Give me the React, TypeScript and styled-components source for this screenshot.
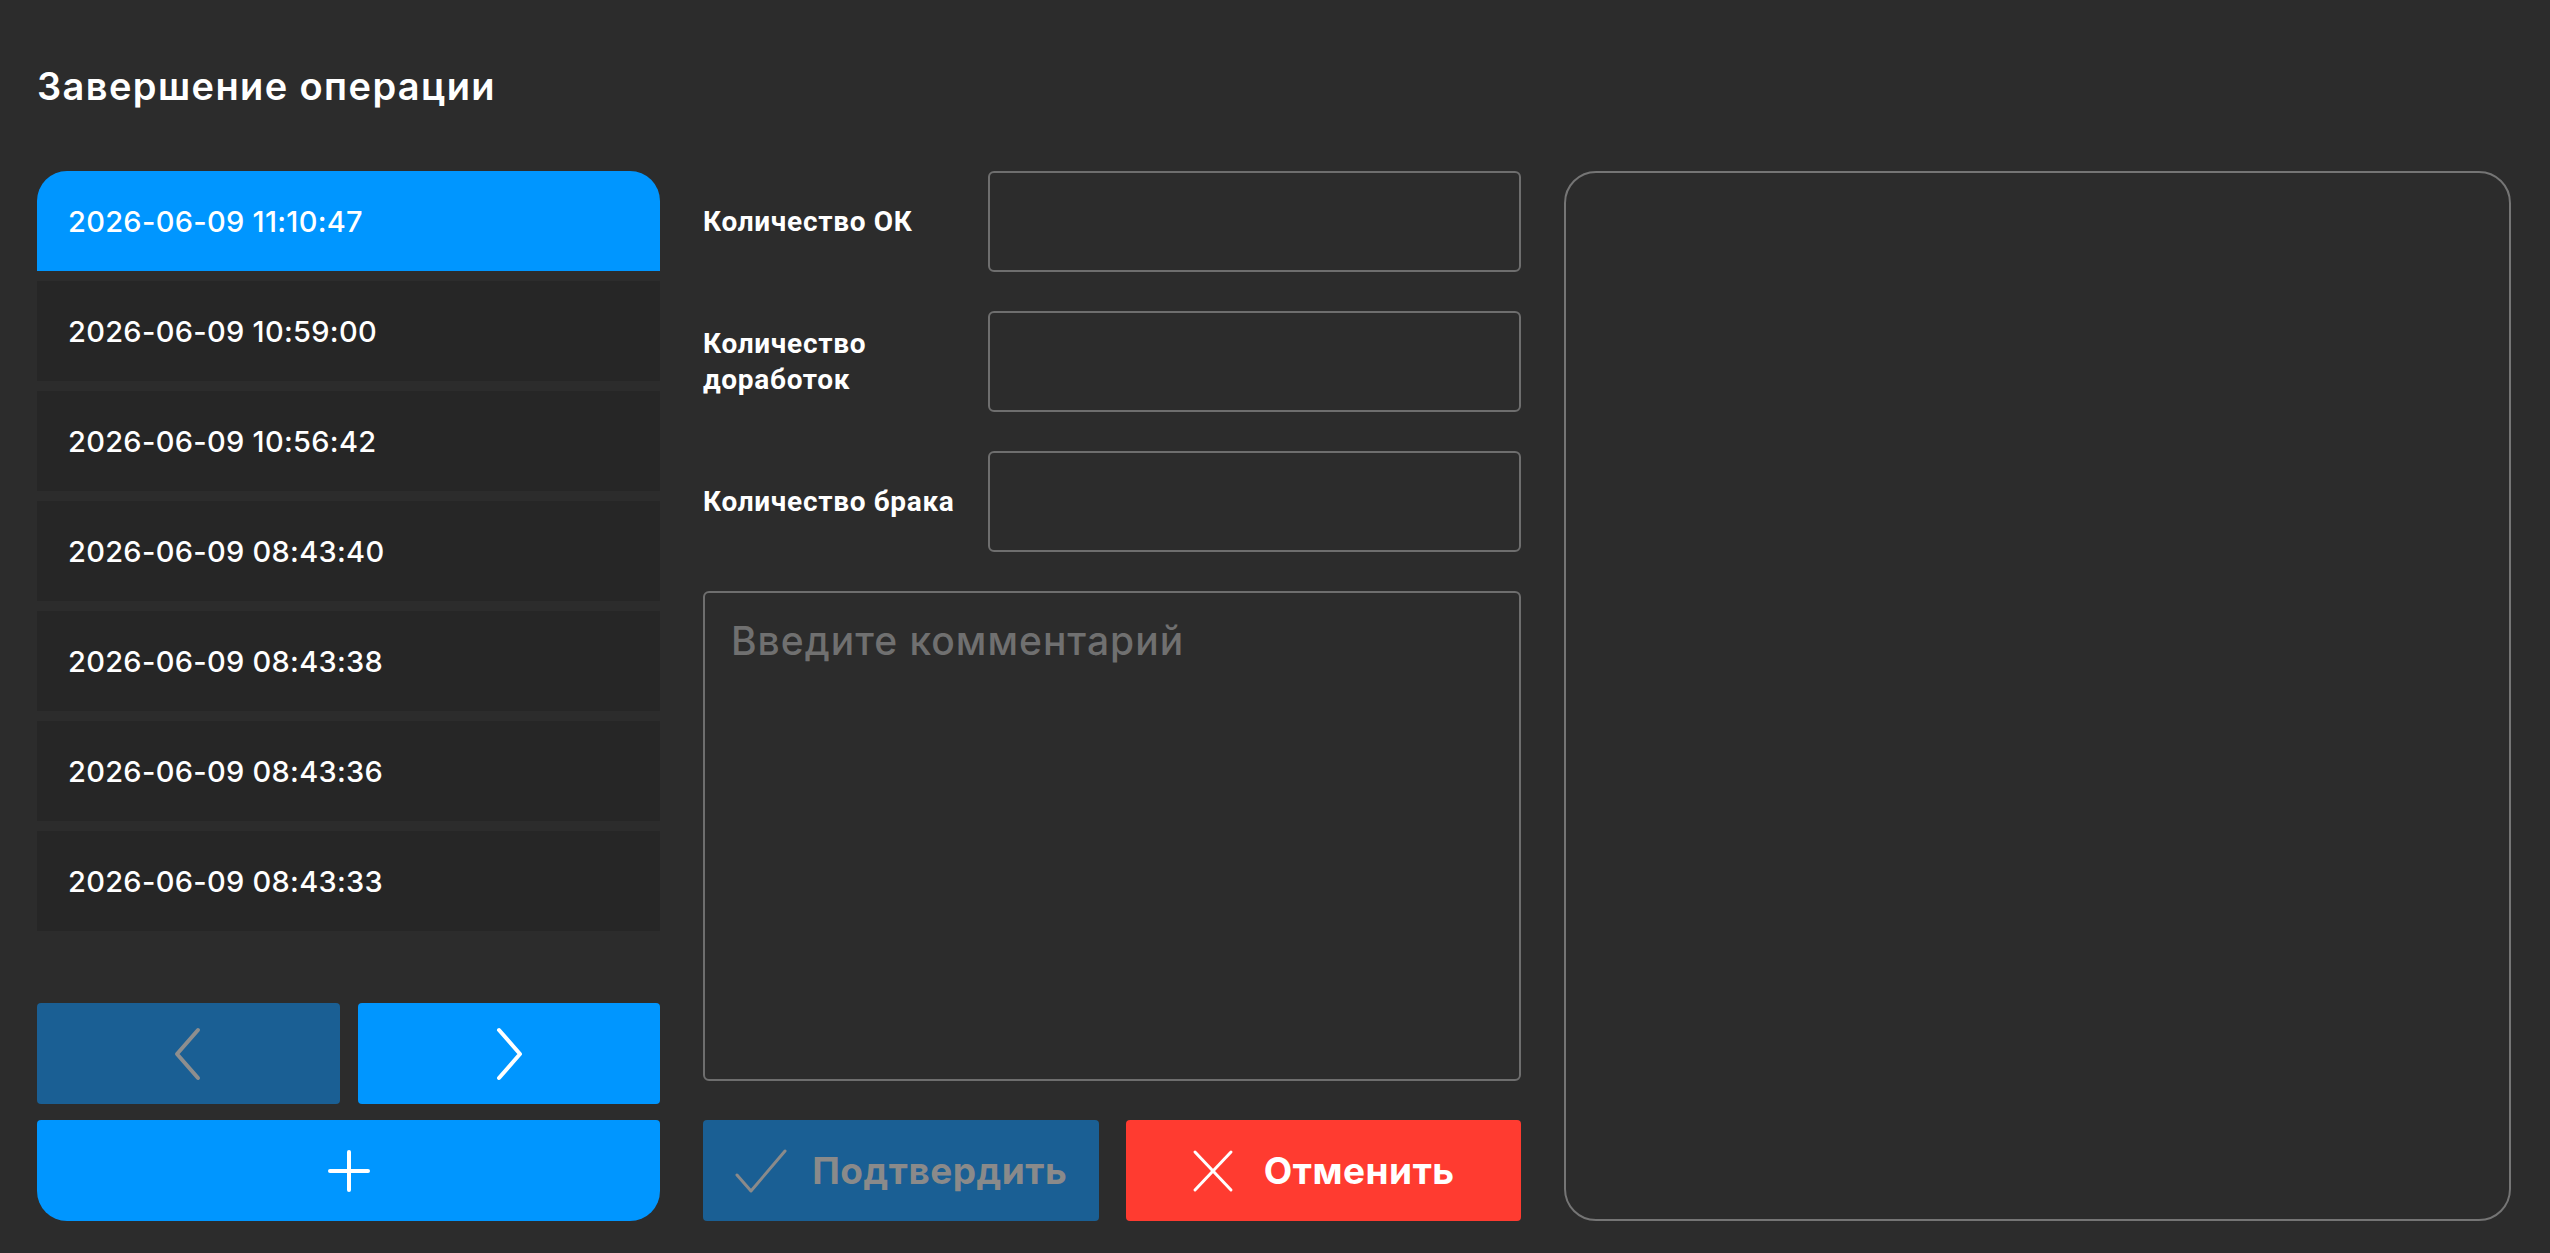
import React from 'react';
import styled, { createGlobalStyle } from 'styled-components';

const GlobalStyle = createGlobalStyle`
    html, body {
        margin: 0;
        padding: 0;
        background: #2c2c2c;
    }
    * {
        box-sizing: border-box;
    }
`;

const dates = [
    '2026-06-09 11:10:47',
    '2026-06-09 10:59:00',
    '2026-06-09 10:56:42',
    '2026-06-09 08:43:40',
    '2026-06-09 08:43:38',
    '2026-06-09 08:43:36',
    '2026-06-09 08:43:33',
];

const fields = [
    { key: 'ok', label: 'Количество ОК' },
    { key: 'rework', label: 'Количество доработок' },
    { key: 'defect', label: 'Количество брака' },
];

export default function App() {
    const selected = 0;

    return (
        <>
            <GlobalStyle />
            <Page>
                <Title>Завершение операции</Title>
                <Main>
                    <LeftColumn>
                        <DateList>
                            {dates.map((d, i) => (
                                <DateItem key={d} $active={i === selected} $first={i === 0}>{d}</DateItem>
                            ))}
                        </DateList>
                        <NavRow>
                            <NavButton $disabled>
                                <svg width="30" height="54" viewBox="0 0 30 54">
                                    <polyline points="25,3 4,27 25,51" fill="none" stroke="#8e8e8e" strokeWidth="4" strokeLinecap="round" strokeLinejoin="round" />
                                </svg>
                            </NavButton>
                            <NavButton>
                                <svg width="30" height="54" viewBox="0 0 30 54">
                                    <polyline points="5,3 26,27 5,51" fill="none" stroke="#fff" strokeWidth="4" strokeLinecap="round" strokeLinejoin="round" />
                                </svg>
                            </NavButton>
                        </NavRow>
                        <AddButton>
                            <svg width="42" height="42" viewBox="0 0 42 42">
                                <line x1="21" y1="2" x2="21" y2="40" stroke="#fff" strokeWidth="4" strokeLinecap="round" />
                                <line x1="2" y1="21" x2="40" y2="21" stroke="#fff" strokeWidth="4" strokeLinecap="round" />
                            </svg>
                        </AddButton>
                    </LeftColumn>

                    <FormColumn>
                        {fields.map(f => (
                            <FieldRow key={f.key}>
                                <FieldLabel>{f.label}</FieldLabel>
                                <NumberInput />
                            </FieldRow>
                        ))}
                        <Comment placeholder="Введите комментарий" />
                        <ActionRow>
                            <ActionButton $kind="confirm">
                                <svg width="54" height="46" viewBox="0 0 54 46">
                                    <polyline points="3,27 17,43 51,3" fill="none" stroke="#8a8a8a" strokeWidth="3" strokeLinecap="round" strokeLinejoin="round" />
                                </svg>
                                Подтвердить
                            </ActionButton>
                            <ActionButton $kind="cancel">
                                <svg width="42" height="44" viewBox="0 0 42 44">
                                    <line x1="3" y1="3" x2="39" y2="41" stroke="#fff" strokeWidth="3" strokeLinecap="round" />
                                    <line x1="39" y1="3" x2="3" y2="41" stroke="#fff" strokeWidth="3" strokeLinecap="round" />
                                </svg>
                                Отменить
                            </ActionButton>
                        </ActionRow>
                    </FormColumn>

                    <PreviewPanel />
                </Main>
            </Page>
        </>
    );
}

const Page = styled.div`
    height: 1253px;
    padding: 0 39px 0 37px;
    display: flex;
    flex-direction: column;
    font-family: Inter, "Noto Sans", sans-serif;
    color: #fff;
`;

const Title = styled.h1`
    margin: 0;
    height: 171px;
    padding-top: 63px;
    font-size: 38px;
    font-weight: 600;
    line-height: 46px;
    letter-spacing: 1.4px;
`;

const Main = styled.div`
    display: grid;
    grid-template-columns: 623px 818px 1fr;
    column-gap: 43px;
    height: 1050px;
`;

const LeftColumn = styled.div`
    display: flex;
    flex-direction: column;
`;

const DateList = styled.div`
    display: flex;
    flex-direction: column;
    gap: 10px;
    flex: 1;
`;

const DateItem = styled.div<{ $active?: boolean; $first?: boolean }>`
    height: 100px;
    display: flex;
    align-items: center;
    padding-left: 31px;
    font-size: 29px;
    font-weight: 500;
    letter-spacing: 0.3px;
    background: ${p => (p.$active ? '#0096ff' : '#262626')};
    border-radius: ${p => (p.$first ? '30px 30px 0 0' : '0')};
`;

const NavRow = styled.div`
    display: grid;
    grid-template-columns: 1fr 1fr;
    gap: 18px;
    margin-bottom: 16px;
`;

const NavButton = styled.button<{ $disabled?: boolean }>`
    height: 101px;
    border: none;
    border-radius: 4px;
    background: ${p => (p.$disabled ? '#1a5f94' : '#0096ff')};
    display: flex;
    align-items: center;
    justify-content: center;
    padding: 0;
`;

const AddButton = styled.button`
    height: 101px;
    border: none;
    border-radius: 4px 4px 30px 30px;
    background: #0096ff;
    display: flex;
    align-items: center;
    justify-content: center;
    padding: 0;
`;

const FormColumn = styled.div`
    display: flex;
    flex-direction: column;
    gap: 39px;
`;

const FieldRow = styled.div`
    display: grid;
    grid-template-columns: 285px 1fr;
    align-items: center;
    height: 101px;
`;

const FieldLabel = styled.label`
    font-family: Roboto, "Liberation Sans", sans-serif;
    font-size: 28px;
    font-weight: 700;
    line-height: 36px;
    letter-spacing: 0.7px;
    padding-right: 12px;
`;

const NumberInput = styled.input`
    height: 101px;
    width: 100%;
    background: transparent;
    border: 2px solid #6e6e6e;
    border-radius: 6px;
    outline: none;
`;

const Comment = styled.textarea`
    flex: 1;
    resize: none;
    background: transparent;
    border: 2px solid #6e6e6e;
    border-radius: 6px;
    padding: 24px 26px;
    font-family: Inter, "Noto Sans", sans-serif;
    font-size: 39px;
    font-weight: 500;
    letter-spacing: 1px;
    color: #fff;
    outline: none;
    &::placeholder {
        color: #707070;
    }
`;

const ActionRow = styled.div`
    display: grid;
    grid-template-columns: 1fr 1fr;
    gap: 27px;
`;

const ActionButton = styled.button<{ $kind: 'confirm' | 'cancel' }>`
    height: 101px;
    border: none;
    border-radius: 4px;
    display: flex;
    align-items: center;
    justify-content: center;
    gap: ${p => (p.$kind === 'confirm' ? '24px' : '30px')};
    font-family: Inter, "Noto Sans", sans-serif;
    font-size: 37px;
    font-weight: 700;
    letter-spacing: 0.5px;
    background: ${p => (p.$kind === 'confirm' ? '#1a5f94' : '#ff3b30')};
    color: ${p => (p.$kind === 'confirm' ? '#8a8a8a' : '#fff')};
`;

const PreviewPanel = styled.div`
    border: 2px solid #757575;
    border-radius: 32px;
`;
